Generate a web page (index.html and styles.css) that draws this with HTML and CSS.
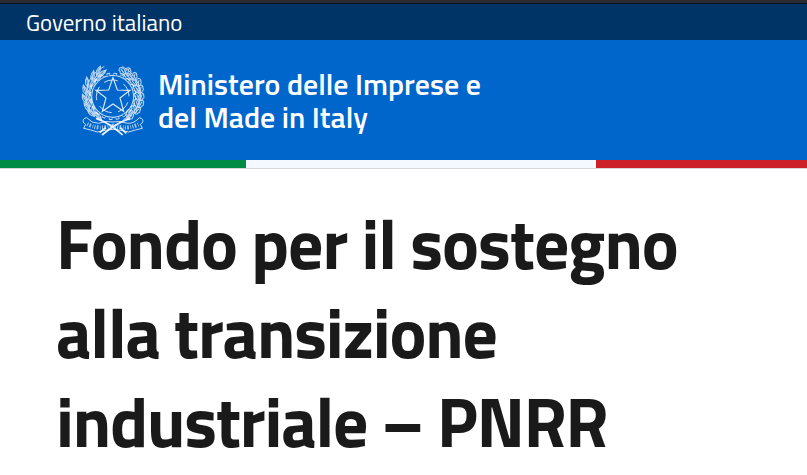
FILE: index.html
```html
<!DOCTYPE html>
<html lang="it">
<head>
<meta charset="utf-8">
<title>Ministero delle Imprese e del Made in Italy</title>
<link rel="stylesheet" href="styles.css">
</head>
<body>
<div class="topbar"><span class="gov">Governo italiano</span></div>
<header class="header">
<svg class="emblem" viewBox="30 24 198 222" aria-hidden="true">
<defs>
<path id="leaf" d="M0 0Q-11-12 0-30Q9-13 0 0V-25"/>
<path id="oak" d="M0 0Q-7-2-5-7Q-11-10-6-15Q-9-21-2-24Q6-24 6-17Q11-12 6-8Q8-2 0 0V-20"/>
</defs>
<g fill="none" stroke="#fff">
<circle cx="128" cy="124" r="63" stroke-width="3.5" opacity=".75"/>
<circle cx="128" cy="124" r="68" stroke-width="6" stroke-dasharray="11 10.4" opacity=".75"/>
<circle cx="128" cy="124" r="66" stroke="#06c" stroke-width="4" stroke-dasharray="7 13.73" stroke-dashoffset="-2"/>
<circle cx="128" cy="124" r="49" stroke-width="3" stroke-dasharray="42 19.57" stroke-dashoffset="-18" opacity=".8"/>
<path d="M129 68L142 105L180 106L150 129L161 169L129 147L97 169L108 129L78 106L116 105Z" fill="#06c" stroke-width="3.5" opacity=".85"/>
<g stroke-width="3" opacity=".75">
<path d="M96 194Q44 168 48 112Q54 58 103 34M160 194Q212 168 212 112Q202 58 157 34"/>
<use href="#leaf" transform="translate(86 65) rotate(48)"/>
<use href="#leaf" transform="translate(80 61) rotate(22)"/>
<use href="#leaf" transform="translate(71 78) rotate(52)"/>
<use href="#leaf" transform="translate(66 76) rotate(10)"/>
<use href="#leaf" transform="translate(60 95) rotate(38)"/>
<use href="#leaf" transform="translate(53 96) rotate(-5)"/>
<use href="#leaf" transform="translate(52 114) rotate(28)"/>
<use href="#leaf" transform="translate(48 119) rotate(-15)"/>
<use href="#leaf" transform="translate(50 138) rotate(23)"/>
<use href="#leaf" transform="translate(50 145) rotate(-25)"/>
<use href="#leaf" transform="translate(57 159) rotate(13)"/>
<use href="#leaf" transform="translate(60 168) rotate(-37)"/>
<use href="#leaf" transform="translate(72 180) rotate(-5)"/>
<use href="#leaf" transform="translate(74 184) rotate(-48)"/>
<use href="#leaf" transform="translate(94 194) rotate(-38)"/>
<use href="#oak" transform="translate(164 58) rotate(-35)"/>
<use href="#oak" transform="translate(173 62) rotate(8)"/>
<use href="#oak" transform="translate(182 73) rotate(-42)"/>
<use href="#oak" transform="translate(190 76) rotate(15)"/>
<use href="#oak" transform="translate(197 92) rotate(-35)"/>
<use href="#oak" transform="translate(203 94) rotate(12)"/>
<use href="#oak" transform="translate(206 112) rotate(-30)"/>
<use href="#oak" transform="translate(209 114) rotate(13)"/>
<use href="#oak" transform="translate(208 135) rotate(-24)"/>
<use href="#oak" transform="translate(210 137) rotate(18)"/>
<use href="#oak" transform="translate(204 157) rotate(-17)"/>
<use href="#oak" transform="translate(206 157) rotate(31)"/>
<use href="#oak" transform="translate(194 174) rotate(-8)"/>
<use href="#oak" transform="translate(194 176) rotate(41)"/>
<use href="#oak" transform="translate(175 188) rotate(8)"/>
<use href="#oak" transform="translate(171 192) rotate(52)"/>
</g>
<path d="M50 188Q37 190 40 202L47 208L41 220Q62 224 82 231Q105 225 129 223Q153 225 176 231Q197 224 217 220L211 208L218 202Q221 190 208 188Q193 206 173 205Q149 196 129 201Q108 196 85 205Q65 205 50 188Z" fill="#06c" stroke-width="2.8" opacity=".85"/>
<path d="M52 207Q84 225 129 212Q174 225 207 207" stroke-width="12" stroke-dasharray="3 4 5 5 2 4" opacity=".65"/>
<path d="M78 190Q118 203 158 240M180 190Q140 203 96 240M89 233L107 218M169 235L151 218" stroke-width="5" opacity=".9"/>
</g>
</svg>
<div class="ministry">Ministero delle Imprese e<br>del Made in Italy</div>
</header>
<div class="flag"><i class="green"></i><i class="white"></i><i class="red"></i></div>
<main class="main">
<h1 class="title"><span class="lead">Fondo per il sostegno</span><br>alla transizione<br>industriale – PNRR</h1>
</main>
</body>
</html>
```
FILE: styles.css
```css
* { box-sizing: border-box; }
body { margin: 0; height: 475px; overflow: hidden; background: #fff; color: #1a1a1a; font-family: "Titillium Web", Roboto, sans-serif; }
.topbar { height: 40px; padding: 3px 0 0 26px; background: #036; border-top: 3px solid #2c2b33; box-shadow: inset 0 1px #07131f; color: #fff; }
.gov { display: block; width: max-content; font-size: 22.9px; line-height: 33px; }
.header { display: flex; height: 120px; padding: 23px 0 0 80px; background: #06c; color: #fff; }
.emblem { flex: none; width: 66px; height: 74px; }
.ministry { margin: 5px 0 0 12px; font-size: 29.85px; line-height: 33px; font-weight: 600; white-space: nowrap; }
.flag { display: flex; height: 9px; border-bottom: 1px solid #d5d8dc; }
.green { width: 246px; background: #008c45; }
.white { width: 350px; background: #f4f9ff; }
.red { flex: 1; background: #cd212a; }
.main { padding: 30px 0 0 56px; }
.title { margin: 0; font-size: 69.5px; line-height: 89px; font-weight: 700; letter-spacing: -1.2px; white-space: nowrap; }
.lead { letter-spacing: -1.05px; }
```
